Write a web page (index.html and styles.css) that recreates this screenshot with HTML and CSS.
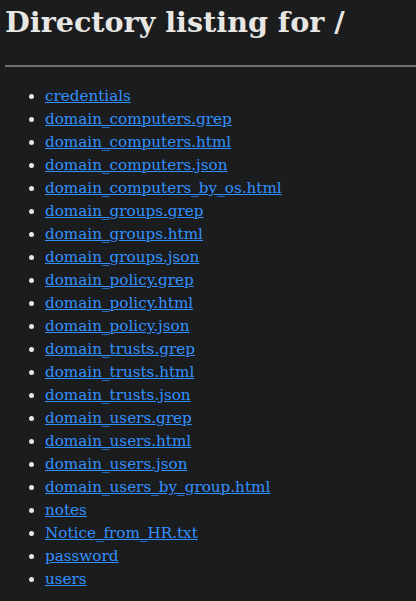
FILE: index.html
```html
<!DOCTYPE html>
<html lang="en">
<head>
    <meta charset="UTF-8">
    <meta name="viewport" content="width=device-width, initial-scale=1.0">
    <title>Directory listing for /</title>
    <link rel="stylesheet" href="styles.css">
</head>
<body>
    <h1>Directory listing for /</h1>
    <hr>
    <ul>
        <li><a href="credentials">credentials</a></li>
        <li><a href="domain_computers.grep">domain_computers.grep</a></li>
        <li><a href="domain_computers.html">domain_computers.html</a></li>
        <li><a href="domain_computers.json">domain_computers.json</a></li>
        <li><a href="domain_computers_by_os.html">domain_computers_by_os.html</a></li>
        <li><a href="domain_groups.grep">domain_groups.grep</a></li>
        <li><a href="domain_groups.html">domain_groups.html</a></li>
        <li><a href="domain_groups.json">domain_groups.json</a></li>
        <li><a href="domain_policy.grep">domain_policy.grep</a></li>
        <li><a href="domain_policy.html">domain_policy.html</a></li>
        <li><a href="domain_policy.json">domain_policy.json</a></li>
        <li><a href="domain_trusts.grep">domain_trusts.grep</a></li>
        <li><a href="domain_trusts.html">domain_trusts.html</a></li>
        <li><a href="domain_trusts.json">domain_trusts.json</a></li>
        <li><a href="domain_users.grep">domain_users.grep</a></li>
        <li><a href="domain_users.html">domain_users.html</a></li>
        <li><a href="domain_users.json">domain_users.json</a></li>
        <li><a href="domain_users_by_group.html">domain_users_by_group.html</a></li>
        <li><a href="notes">notes</a></li>
        <li><a href="Notice_from_HR.txt">Notice_from_HR.txt</a></li>
        <li><a href="password">password</a></li>
        <li><a href="users">users</a></li>
    </ul>
    <hr>
</body>
</html>
```

FILE: styles.css
```css
html {
    background: #1b1c1e;
}

body {
    font-family: "DejaVu Serif", "Liberation Serif", serif;
    background: #1b1c1e;
    color: #e8e6e3;
    margin: 0;
    padding: 0 0 0 5px;
}

h1 {
    font-size: 28.6px;
    line-height: 40px;
    margin: 2px 0 0 0;
}

hr {
    border: none;
    border-top: 2px solid #6f6f6f;
    margin: 23px 0 0 0;
}

ul {
    margin: 18px 0 0 0;
    padding-left: 40px;
    font-size: 15.2px;
    line-height: 23px;
}

a {
    color: #3391ff;
}
```
